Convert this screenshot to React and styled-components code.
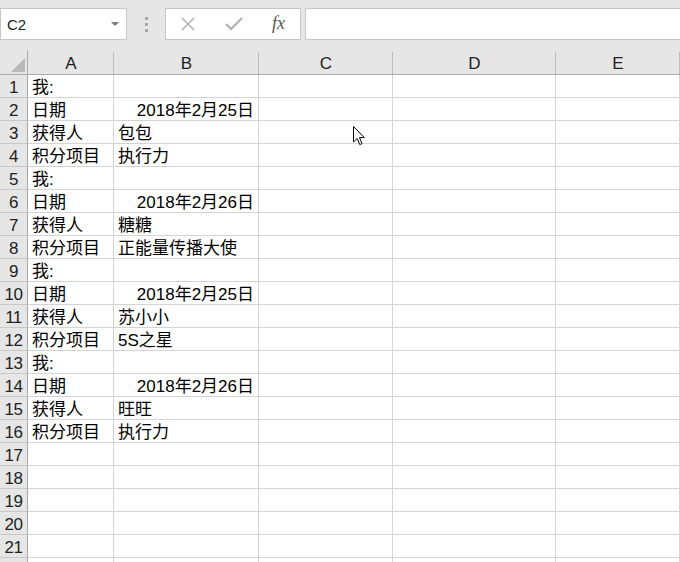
import React from 'react'
import styled, { createGlobalStyle } from 'styled-components'

const GlobalStyle = createGlobalStyle`
  html, body {
    margin: 0;
    padding: 0;
    background: #e6e6e6;
    overflow: hidden;
  }
  body {
    font-family: "Liberation Sans", "Noto Sans CJK SC", sans-serif;
  }
`

const columns = ['A', 'B', 'C', 'D', 'E']

const data = [
  ['我:', ''],
  ['日期', '2018年2月25日'],
  ['获得人', '包包'],
  ['积分项目', '执行力'],
  ['我:', ''],
  ['日期', '2018年2月26日'],
  ['获得人', '糖糖'],
  ['积分项目', '正能量传播大使'],
  ['我:', ''],
  ['日期', '2018年2月25日'],
  ['获得人', '苏小小'],
  ['积分项目', '5S之星'],
  ['我:', ''],
  ['日期', '2018年2月26日'],
  ['获得人', '旺旺'],
  ['积分项目', '执行力'],
]

const App = () => {
  const rows = []
  for (let i = 0; i < 22; i++) {
    rows.push(data[i] || ['', ''])
  }

  return (
    <Page>
      <GlobalStyle />
      <Toolbar>
        <NameBox>
          <span>C2</span>
          <DropArrow />
        </NameBox>
        <Grip>
          <i />
          <i />
          <i />
        </Grip>
        <FormulaButtons>
          <svg width="14" height="14" viewBox="0 0 14 14">
            <path d="M1 1 L13 13 M13 1 L1 13" stroke="#b4b4b4" strokeWidth="1.6" fill="none" />
          </svg>
          <svg width="18" height="14" viewBox="0 0 18 14">
            <path d="M1 7 L6 12 L17 1" stroke="#b4b4b4" strokeWidth="2.4" fill="none" />
          </svg>
          <Fx>fx</Fx>
        </FormulaButtons>
        <FormulaInput />
      </Toolbar>

      <Sheet>
        <Corner>
          <svg width="14" height="14" viewBox="0 0 14 14">
            <polygon points="14,0 14,14 0,14" fill="#b9b9b9" />
          </svg>
        </Corner>
        {columns.map((c) => (
          <ColHeader key={c}>{c}</ColHeader>
        ))}
        {rows.map((r, i) => (
          <React.Fragment key={i}>
            <RowHeader>{i < 21 ? i + 1 : ''}</RowHeader>
            <Cell>{r[0]}</Cell>
            <Cell $right={r[1].startsWith('2018')}>{r[1]}</Cell>
            <Cell />
            <Cell />
            <Cell />
          </React.Fragment>
        ))}
      </Sheet>

      <Cursor width="12" height="20" viewBox="0 0 12 20">
        <path
          d="M0.5 0.5 L0.5 16 L4.2 12.5 L6.8 18.6 L9 17.6 L6.5 11.6 L11.3 11.6 Z"
          fill="#fff"
          stroke="#000"
          strokeWidth="1"
          strokeLinejoin="miter"
        />
      </Cursor>
    </Page>
  )
}

export default App

const Page = styled.div`
  position: relative;
  width: 680px;
  height: 562px;
  overflow: hidden;
  background: #e6e6e6;
`

const Toolbar = styled.div`
  display: flex;
  align-items: center;
  height: 50px;
  padding-bottom: 2px;
  box-sizing: border-box;
`

const NameBox = styled.div`
  width: 127px;
  height: 32px;
  box-sizing: border-box;
  background: #fff;
  border: 1px solid #c6c6c6;
  display: flex;
  align-items: center;
  justify-content: space-between;
  padding: 0 7px 0 6px;
  font-size: 15px;
  color: #222;
`

const DropArrow = styled.span`
  width: 0;
  height: 0;
  border-left: 4px solid transparent;
  border-right: 4px solid transparent;
  border-top: 4px solid #7a7a7a;
`

const Grip = styled.div`
  width: 38px;
  display: flex;
  flex-direction: column;
  align-items: center;
  gap: 3px;

  i {
    display: block;
    width: 3px;
    height: 3px;
    background: #a8a8a8;
  }
`

const FormulaButtons = styled.div`
  width: 136px;
  height: 32px;
  box-sizing: border-box;
  background: #fff;
  border: 1px solid #c6c6c6;
  display: flex;
  align-items: center;
  gap: 30px;
  padding-left: 15px;
`

const Fx = styled.span`
  font-family: "Liberation Serif", serif;
  font-style: italic;
  font-size: 18px;
  color: #555;
  margin-top: -2px;
  margin-left: -1px;
`

const FormulaInput = styled.div`
  flex: 1;
  height: 32px;
  margin-left: 4px;
  box-sizing: border-box;
  background: #fff;
  border: 1px solid #c6c6c6;
  border-right: none;
`

const Sheet = styled.div`
  display: grid;
  grid-template-columns: 28px 86px 145px 134px 163px 1fr;
  grid-template-rows: 25px;
  grid-auto-rows: 23px;
  background: #fff;
`

const Corner = styled.div`
  background: #e6e6e6;
  border-right: 1px solid #ababab;
  border-bottom: 1px solid #ababab;
  display: flex;
  align-items: flex-end;
  justify-content: flex-end;
  padding: 0 2px 2px 0;
`

const ColHeader = styled.div`
  position: relative;
  background: #e6e6e6;
  border-bottom: 1px solid #ababab;
  font-size: 17px;
  color: #222;
  text-align: center;
  line-height: 28px;

  &::after {
    content: '';
    position: absolute;
    right: 0;
    top: 2px;
    bottom: 0;
    width: 1px;
    background: #bdbdbd;
  }
`

const RowHeader = styled.div`
  background: #e6e6e6;
  border-right: 1px solid #a6a6a6;
  border-bottom: 1px solid #c8c8c8;
  font-size: 17px;
  color: #222;
  text-align: center;
  line-height: 25px;
  overflow: hidden;
  white-space: nowrap;
  letter-spacing: -0.5px;
`

const Cell = styled.div`
  border-right: 1px solid #d4d4d4;
  border-bottom: 1px solid #d4d4d4;
  font-size: 17px;
  color: #000;
  line-height: 25px;
  padding: 0 4px 0 4px;
  white-space: nowrap;
  overflow: hidden;
  text-align: ${(p) => (p.$right ? 'right' : 'left')};
`

const Cursor = styled.svg`
  position: absolute;
  left: 353px;
  top: 126px;
`
